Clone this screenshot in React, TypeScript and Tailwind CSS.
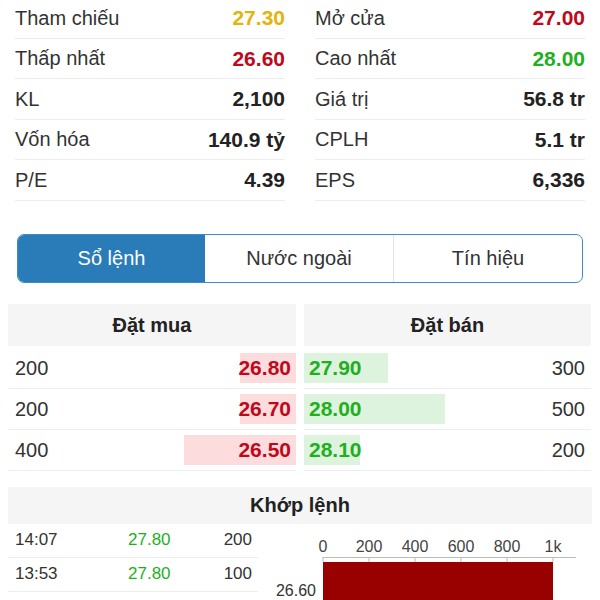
import React from "react";

const stats: [string, string, string, string, string, string][] = [
  ["Tham chiếu", "27.30", "text-[#e3b50c]", "Mở cửa", "27.00", "text-[#c0081c]"],
  ["Thấp nhất", "26.60", "text-[#c0081c]", "Cao nhất", "28.00", "text-[#1eb01e]"],
  ["KL", "2,100", "text-[#222]", "Giá trị", "56.8 tr", "text-[#222]"],
  ["Vốn hóa", "140.9 tỷ", "text-[#222]", "CPLH", "5.1 tr", "text-[#222]"],
  ["P/E", "4.39", "text-[#222]", "EPS", "6,336", "text-[#222]"],
];

const book = [
  { bv: 200, bp: "26.80", sp: "27.90", sv: 300 },
  { bv: 200, bp: "26.70", sp: "28.00", sv: 500 },
  { bv: 400, bp: "26.50", sp: "28.10", sv: 200 },
];

const trades = [
  ["14:07", "27.80", "200"],
  ["13:53", "27.80", "100"],
];

function StatRow({ label, value, color }: { label: string; value: string; color: string }) {
  return (
    <div className="flex h-[39.5px] items-center justify-between border-b border-[#ececec] box-content">
      <span className="text-[20px] text-[#333]">{label}</span>
      <span className={`text-[21px] font-bold ${color}`}>{value}</span>
    </div>
  );
}

export default function App() {
  return (
    <div
      className="h-[600px] w-[600px] overflow-hidden bg-white"
      style={{ fontFamily: '"Liberation Sans", Arial, sans-serif' }}
    >
      {/* stats */}
      <div className="-mt-[2px] grid grid-cols-2 gap-x-[30px] px-[15px]">
        <div className="flex flex-col">
          {stats.map((s) => (
            <StatRow key={s[0]} label={s[0]} value={s[1]} color={s[2]} />
          ))}
        </div>
        <div className="flex flex-col">
          {stats.map((s) => (
            <StatRow key={s[3]} label={s[3]} value={s[4]} color={s[5]} />
          ))}
        </div>
      </div>

      {/* tabs */}
      <div className="mx-[17px] mt-[33px] flex h-[49px] overflow-hidden rounded-[7px] border border-[#3f8bc6]">
        <div className="flex w-[187px] items-center justify-center bg-[#2a7cb9] text-[20px] text-white">
          Sổ lệnh
        </div>
        <div className="flex w-[189px] items-center justify-center border-r border-[#e4e4e4] text-[20px] text-[#333]">
          Nước ngoài
        </div>
        <div className="flex flex-1 items-center justify-center text-[20px] text-[#333]">
          Tín hiệu
        </div>
      </div>

      {/* order book */}
      <div className="mx-[8px] mt-[21px] flex gap-[8px]">
        <div className="flex w-[288px] flex-col">
          <div className="flex h-[42px] items-center justify-center bg-[#f5f5f5] text-[20px] font-bold text-[#222]">
            Đặt mua
          </div>
          <div className="h-[2px]" />
          {book.map((r, i) => (
            <div key={i} className="flex h-[40px] items-center justify-between border-b border-[#ededed] box-content pl-[7px]">
              <span className="text-[20px] text-[#333]">{r.bv}</span>
              <div className="flex h-[30px] items-center justify-end bg-[#fcdcdc] pr-[5px]" style={{ width: `${(r.bv / 1000) * 100}%` }}>
                <span className="text-[21px] font-bold text-[#c0081c]">{r.bp}</span>
              </div>
            </div>
          ))}
        </div>
        <div className="flex w-[287px] flex-col">
          <div className="flex h-[42px] items-center justify-center bg-[#f5f5f5] text-[20px] font-bold text-[#222]">
            Đặt bán
          </div>
          <div className="h-[2px]" />
          {book.map((r, i) => (
            <div key={i} className="flex h-[40px] items-center justify-between border-b border-[#ededed] box-content pr-[6px]">
              <div className="flex h-[30px] items-center bg-[#ddf3dd] pl-[5px]" style={{ width: `${(r.sv / 1000) * 100}%` }}>
                <span className="whitespace-nowrap text-[21px] font-bold text-[#1eb01e]">{r.sp}</span>
              </div>
              <span className="text-[20px] text-[#333]">{r.sv}</span>
            </div>
          ))}
        </div>
      </div>

      {/* matched */}
      <div className="mx-[8px] mt-[16px] flex h-[37px] items-center justify-center bg-[#f5f5f5] text-[20px] font-bold text-[#222]">
        Khớp lệnh
      </div>
      <div className="mx-[8px] flex">
        <div className="flex w-[250px] flex-col">
          {trades.map((t, i) => (
            <div key={i} className="flex h-[33px] items-center border-b border-[#ededed] box-content pl-[7px] text-[17px]">
              <span className="w-[113px] text-[#333]">{t[0]}</span>
              <span className="w-[60px] text-[#1eb01e]">{t[1]}</span>
              <span className="flex-1 pr-[6px] text-right text-[#333]">{t[2]}</span>
            </div>
          ))}
        </div>
        <div className="flex-1">
          <svg width="333" height="80" viewBox="0 0 333 80" style={{ display: "block" }}>
            {[
              ["0", 65],
              ["200", 111],
              ["400", 157],
              ["600", 203],
              ["800", 249],
              ["1k", 295],
            ].map(([l, x]) => (
              <g key={l as string}>
                <text x={x as number} y={28} textAnchor="middle" fontSize="16" fill="#444" fontFamily="Liberation Sans, Arial, sans-serif">
                  {l}
                </text>
                <line x1={x as number} y1={33} x2={x as number} y2={38} stroke="#bbb" strokeWidth="1" />
              </g>
            ))}
            <line x1={65} y1={33.5} x2={318} y2={33.5} stroke="#bbb" strokeWidth="1" />
            <rect x={65} y={38} width={230} height={60} fill="#990000" />
            <text x={58} y={72} textAnchor="end" fontSize="16" fill="#333" fontFamily="Liberation Sans, Arial, sans-serif">
              26.60
            </text>
          </svg>
        </div>
      </div>
    </div>
  );
}
